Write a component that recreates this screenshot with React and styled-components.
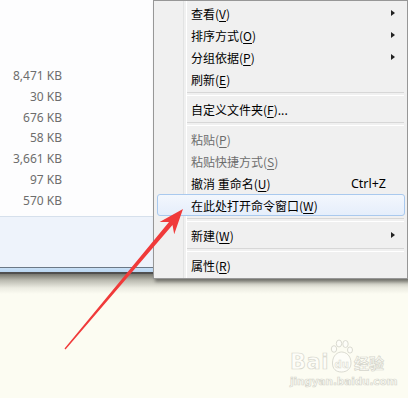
import React from 'react';
import styled, { createGlobalStyle } from 'styled-components';

const GlobalStyle = createGlobalStyle`
  html, body {
    margin: 0;
    padding: 0;
    background: #fcfcf2;
  }
  * { box-sizing: border-box; }
`;

const Page = styled.div`
  position: relative;
  width: 408px;
  height: 398px;
  overflow: hidden;
  background: #fcfcf2;
  font-family: "Noto Sans", "Noto Sans CJK SC", sans-serif;
`;

const Explorer = styled.div`
  display: flex;
  flex-direction: column;
  width: 408px;
`;

const FileList = styled.div`
  height: 217px;
  background: #fdfdfe;
  border-bottom: 1px solid #d6e0ec;
  padding-top: 66px;
`;

const SizeColumn = styled.div`
  width: 62px;
  display: flex;
  flex-direction: column;
`;

const SizeCell = styled.div`
  height: 20.8px;
  line-height: 20.8px;
  font-size: 12px;
  color: #6d6d6d;
  text-align: right;
  white-space: nowrap;
`;

const DetailsPane = styled.div`
  height: 51px;
  background: #eef3fb;
  border-bottom: 1px solid #6b7886;
`;

const StatusBand = styled.div`
  height: 6px;
  background: linear-gradient(#c9e0f6, #b9d6f2);
  border-bottom: 2px solid #505050;
`;

const WindowShadow = styled.div`
  height: 20px;
  background: linear-gradient(#77776f, #b8b8ae 30%, #ecece2 70%, #fcfcf2);
`;

const Menu = styled.div`
  position: absolute;
  left: 153px;
  top: 0;
  width: 255px;
  height: 279px;
  background: #f0f0f0;
  border: 1px solid #979797;
  box-shadow: 2px 3px 3px rgba(0, 0, 0, 0.35);
  padding: 1px 2px 1px 2px;
  font-family: "Noto Sans CJK SC", "Noto Sans", sans-serif;
  font-size: 12px;

  &::before {
    content: '';
    position: absolute;
    left: 29px;
    top: 0;
    bottom: 0;
    width: 2px;
    border-left: 1px solid #e2e3e3;
    border-right: 1px solid #ffffff;
  }
`;

const Item = styled.div`
  position: relative;
  height: 22px;
  display: flex;
  align-items: center;
  padding-left: 33px;
  padding-right: 18px;
  color: ${p => (p.disabled ? '#6d6d6d' : '#000000')};
  border: 1px solid ${p => (p.active ? '#a9c9ee' : 'transparent')};
  border-radius: 3px;
  background: ${p => (p.active ? 'linear-gradient(#f3f7fd, #e5eefb)' : 'transparent')};
  margin-left: 1px;
  z-index: 1;

  u {
    text-underline-offset: 2px;
  }
`;

const Label = styled.span`
  flex: 1;
  white-space: nowrap;
`;

const Shortcut = styled.span`
  font-family: "Noto Sans", sans-serif;
  font-size: 12.5px;
`;

const SubArrow = styled.span`
  position: absolute;
  right: 9px;
  top: 7px;
  width: 0;
  height: 0;
  border-top: 3.5px solid transparent;
  border-bottom: 3.5px solid transparent;
  border-left: 4px solid #222;
`;

const Separator = styled.div`
  height: 8px;
  display: flex;
  align-items: center;
  padding-left: 30px;
  padding-right: 1px;

  &::after {
    content: '';
    flex: 1;
    height: 2px;
    border-top: 1px solid #d7d7d7;
    border-bottom: 1px solid #ffffff;
  }
`;

const ArrowSvg = styled.svg`
  position: absolute;
  left: 0;
  top: 0;
  width: 408px;
  height: 398px;
  pointer-events: none;
  z-index: 5;
`;

const Watermark = styled.div`
  position: absolute;
  left: 290px;
  top: 339px;
  display: flex;
  flex-direction: column;
  align-items: flex-start;
  color: #fdfdf8;
  -webkit-text-stroke: 0.7px #d6d6cc;
  font-family: "DejaVu Sans", sans-serif;
  font-weight: bold;
`;

const MarkRow = styled.div`
  display: flex;
  align-items: flex-end;
  gap: 1px;
  height: 34px;
`;

const MarkBig = styled.span`
  font-size: 21px;
  line-height: 22px;
  letter-spacing: 0.5px;
`;

const MarkCjk = styled.span`
  font-family: "Noto Sans CJK SC", sans-serif;
  font-size: 15px;
  line-height: 21px;
`;

const MarkUrl = styled.span`
  font-size: 10.5px;
  line-height: 13px;
  margin-top: 2px;
  letter-spacing: -0.1px;
`;

const sizes = ['8,471 KB', '30 KB', '676 KB', '58 KB', '3,661 KB', '97 KB', '570 KB'];

const menu = [
  { label: '查看', key: 'V', sub: true },
  { label: '排序方式', key: 'O', sub: true },
  { label: '分组依据', key: 'P', sub: true },
  { label: '刷新', key: 'E' },
  'sep',
  { label: '自定义文件夹', key: 'F', tail: '...' },
  'sep',
  { label: '粘贴', key: 'P', disabled: true },
  { label: '粘贴快捷方式', key: 'S', disabled: true },
  { label: '撤消 重命名', key: 'U', shortcut: 'Ctrl+Z' },
  { label: '在此处打开命令窗口', key: 'W', active: true },
  'sep',
  { label: '新建', key: 'W', sub: true },
  'sep',
  { label: '属性', key: 'R' },
];

function Paw() {
  return (
    <svg width="23" height="34" viewBox="0 0 23 34">
      <g fill="#fdfdf8" stroke="#d6d6cc" strokeWidth="0.9">
        <ellipse cx="4" cy="10" rx="2.7" ry="3.3" />
        <ellipse cx="9" cy="4.5" rx="2.7" ry="3.5" />
        <ellipse cx="15.5" cy="5" rx="2.7" ry="3.5" />
        <ellipse cx="20" cy="11" rx="2.5" ry="3.1" />
        <path d="M2.5 24 C2.5 16 8 13 11.5 13 C15.5 13 21 16 21 24 C21 30 16.5 33 11.5 33 C6 33 2.5 30 2.5 24 Z" />
      </g>
      <text x="11.7" y="28.5" textAnchor="middle" fontSize="10" fontWeight="bold"
        fontFamily="DejaVu Sans, sans-serif" fill="#fdfdf8" stroke="#d6d6cc" strokeWidth="0.5">du</text>
    </svg>
  );
}

export default function App() {
  // arrow geometry: tail to tip
  const tip = [183, 209];
  const tail = [65, 349];
  const dx = tip[0] - tail[0];
  const dy = tip[1] - tail[1];
  const len = Math.hypot(dx, dy);
  const u = [dx / len, dy / len];
  const n = [-u[1], u[0]];
  const at = (d, w) => [tip[0] - u[0] * d + n[0] * w, tip[1] - u[1] * d + n[1] * w];
  const pts = [
    tip,
    at(25, 9.5),
    at(19, 2.3),
    [tail[0] + n[0] * 0.6, tail[1] + n[1] * 0.6],
    [tail[0] - n[0] * 0.6, tail[1] - n[1] * 0.6],
    at(19, -2.3),
    at(25, -9.5),
  ].map(p => p.map(v => v.toFixed(1)).join(',')).join(' ');

  return (
    <Page>
      <GlobalStyle />
      <Explorer>
        <FileList>
          <SizeColumn>
            {sizes.map(s => (
              <SizeCell key={s}>{s}</SizeCell>
            ))}
          </SizeColumn>
        </FileList>
        <DetailsPane />
        <StatusBand />
        <WindowShadow />
      </Explorer>

      <Menu>
        {menu.map((m, i) =>
          m === 'sep' ? (
            <Separator key={i} />
          ) : (
            <Item key={i} disabled={m.disabled} active={m.active}>
              <Label>
                {m.label}(<u>{m.key}</u>){m.tail}
              </Label>
              {m.shortcut && <Shortcut>{m.shortcut}</Shortcut>}
              {m.sub && <SubArrow />}
            </Item>
          )
        )}
      </Menu>

      <ArrowSvg viewBox="0 0 408 398">
        <polygon points={pts} fill="#f03a3a" />
      </ArrowSvg>

      <Watermark>
        <MarkRow>
          <MarkBig>Bai</MarkBig>
          <Paw />
          <MarkCjk>经验</MarkCjk>
        </MarkRow>
        <MarkUrl>jingyan.baidu.com</MarkUrl>
      </Watermark>
    </Page>
  );
}
